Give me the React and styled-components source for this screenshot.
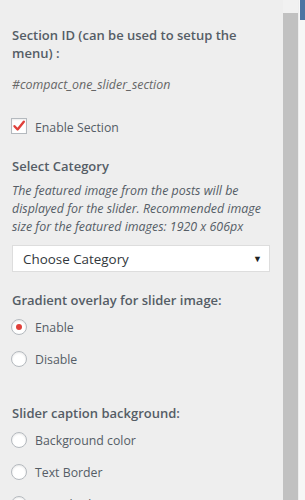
import React from "react";
import styled, { createGlobalStyle } from "styled-components";

const Global = createGlobalStyle`
  html, body { margin: 0; padding: 0; background: #eeeeee; }
  body { font-family: "Open Sans", "Noto Sans", sans-serif; }
  * { box-sizing: border-box; }
`;

const Frame = styled.div`
  display: flex;
  width: 305px;
  height: 500px;
  overflow: hidden;
  background: #eeeeee;
`;

const Panel = styled.div`
  flex: 0 0 282px;
  padding: 26px 12px 0 12px;
  color: #555d66;
  overflow: hidden;
`;

const ScrollTrack = styled.div`
  flex: 0 0 17px;
  display: flex;
  flex-direction: column;
  padding: 0 1px 0 1px;
  background: #eeeeee;
`;

const TrackTop = styled.div`
  height: 13px;
  background: #f1f1f1;
`;

const Thumb = styled.div`
  flex: 1;
  background: #c1c1c1;
`;

const EdgeGap = styled.div`
  flex: 0 0 1px;
  background: #f8f8f8;
`;

const Edge = styled.div`
  flex: 1;
  display: flex;
  flex-direction: column;
  background: #f6f6f6;
`;

const EdgeBlue = styled.div`
  height: 20px;
  background: #4c75a3;
`;

const Title = styled.div`
  font-size: 13px;
  font-weight: 600;
  line-height: 18px;
  color: #555d66;
  margin-top: ${(p) => p.$mt || 0}px;
  margin-bottom: ${(p) => p.$mb || 0}px;
`;

const Italic = styled.div`
  font-size: 12.4px;
  font-style: italic;
  line-height: 18px;
  color: ${(p) => p.$color || "#555d66"};
  margin-top: ${(p) => p.$mt || 0}px;
`;

const Row = styled.label`
  display: flex;
  align-items: center;
  gap: 8px;
  height: 16px;
  font-size: 12.3px;
  color: #555d66;
  margin-top: ${(p) => p.$mt || 0}px;
  margin-bottom: ${(p) => p.$mb || 0}px;
  margin-left: -1px;
`;

const Box = styled.span`
  width: 16px;
  height: 16px;
  margin-top: -3px;
  border: 1px solid #b4b9be;
  background: #fff;
  box-shadow: inset 0 1px 2px rgba(0, 0, 0, 0.07);
  display: flex;
  align-items: center;
  justify-content: center;
  flex: none;
`;

const Radio = styled.span`
  width: 16px;
  height: 16px;
  border-radius: 50%;
  border: 1px solid #b4b9be;
  background: #fff;
  box-shadow: inset 0 1px 2px rgba(0, 0, 0, 0.1);
  display: flex;
  align-items: center;
  justify-content: center;
  flex: none;
  &::after {
    content: "";
    display: ${(p) => (p.$on ? "block" : "none")};
    width: 6px;
    height: 6px;
    border-radius: 50%;
    background: #e0403a;
  }
`;

const Select = styled.div`
  display: flex;
  align-items: center;
  justify-content: space-between;
  height: 27px;
  margin-top: 9px;
  padding: 0 7px 0 10px;
  background: #fff;
  border: 1px solid #ddd;
  font-size: 13.4px;
  color: #32373c;
`;

const Caret = styled.span`
  font-size: 9px;
  color: #222;
`;

export default function App() {
  return (
    <Frame>
      <Global />
      <Panel>
        <Title>Section ID (can be used to setup the menu) :</Title>
        <Italic $color="#666" $mt={14}>#compact_one_slider_section</Italic>
        <Row $mt={25}>
          <Box>
            <svg width="14" height="14" viewBox="0 0 14 14">
              <path d="M2.5 7.2 L5.6 10.5 L11.8 2.8" fill="none" stroke="#e0403a" strokeWidth="2.4" strokeLinecap="round" strokeLinejoin="round" />
            </svg>
          </Box>
          Enable Section
        </Row>
        <Title $mt={22} $mb={7}>Select Category</Title>
        <Italic>
          The featured image from the posts will be displayed for the slider. Recommended image size for the featured images: 1920 x 606px
        </Italic>
        <Select>
          Choose Category
          <Caret>▼</Caret>
        </Select>
        <Title $mt={19} $mb={10}>Gradient overlay for slider image:</Title>
        <Row $mb={16}>
          <Radio $on />
          Enable
        </Row>
        <Row>
          <Radio />
          Disable
        </Row>
        <Title $mt={37} $mb={10}>Slider caption background:</Title>
        <Row $mb={16}>
          <Radio />
          Background color
        </Row>
        <Row $mb={16}>
          <Radio />
          Text Border
        </Row>
        <Row>
          <Radio />
          Text Shadow
        </Row>
      </Panel>
      <ScrollTrack>
        <TrackTop />
        <Thumb />
      </ScrollTrack>
      <EdgeGap />
      <Edge>
        <EdgeBlue />
      </Edge>
    </Frame>
  );
}
